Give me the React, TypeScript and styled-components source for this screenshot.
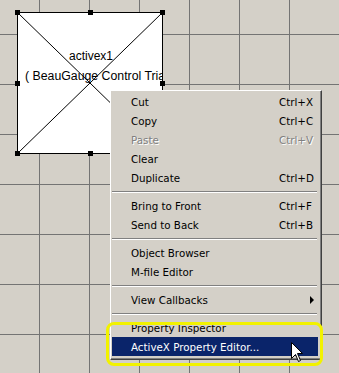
import styled, { createGlobalStyle } from 'styled-components';

const GlobalStyle = createGlobalStyle`
  html, body {
    margin: 0;
    padding: 0;
    background: #d4d0c8;
  }
`;

const Canvas = styled.div`
  position: relative;
  width: 339px;
  height: 373px;
  overflow: hidden;
  background-color: #d4d0c8;
  background-image: linear-gradient(to right, #747474 1px, transparent 1px),
    linear-gradient(to bottom, #747474 1px, transparent 1px);
  background-size: 50px 50px;
  background-position: 39px 34px;
  font-family: 'DejaVu Sans', 'Liberation Sans', sans-serif;
`;

/* the ActiveX control sitting on the layout canvas */
const Control = styled.div`
  position: absolute;
  left: 17px;
  top: 12px;
  width: 146px;
  height: 142px;
  box-sizing: border-box;
  border: 1px solid #000;
  background: #fff;
  padding-top: 33px;
  display: flex;
  flex-direction: column;
  font-family: 'Liberation Sans', Arial, sans-serif;
  font-size: 12px;
  line-height: 20px;
  color: #000;
`;

const Cross = styled.svg`
  position: absolute;
  inset: 0;
  width: 100%;
  height: 100%;
`;

const ControlName = styled.div`
  position: relative;
  text-align: center;
  padding-left: 2px;
`;

const ControlType = styled.div`
  position: relative;
  white-space: nowrap;
  overflow: hidden;
  padding-left: 7px;
  font-size: 12.3px;
`;

const Handle = styled.span<{ $x: 'l' | 'c' | 'r'; $y: 't' | 'm' | 'b' }>`
  position: absolute;
  width: 5px;
  height: 5px;
  background: #000;
  left: ${(p) => (p.$x === 'l' ? '-3px' : p.$x === 'c' ? 'calc(50% - 2px)' : 'auto')};
  right: ${(p) => (p.$x === 'r' ? '-3px' : 'auto')};
  top: ${(p) => (p.$y === 't' ? '-3px' : p.$y === 'm' ? 'calc(50% - 2px)' : 'auto')};
  bottom: ${(p) => (p.$y === 'b' ? '-3px' : 'auto')};
`;

/* context menu */
const Menu = styled.div`
  position: absolute;
  left: 110px;
  top: 90px;
  width: 212px;
  box-sizing: border-box;
  background: #d4d0c8;
  border: 1px solid;
  border-color: #ffffff #404040 #404040 #ffffff;
  box-shadow: inset -1px -1px #808080;
  padding: 1px 3px 3px 1px;
  display: flex;
  flex-direction: column;
`;

const Item = styled.div<{ $disabled?: boolean; $active?: boolean }>`
  display: grid;
  grid-template-columns: 148px 1fr;
  align-items: center;
  height: 19px;
  padding-left: 19px;
  font-size: 10.3px;
  white-space: nowrap;
  color: ${(p) => (p.$disabled ? '#808080' : p.$active ? '#ffffff' : '#000000')};
  background: ${(p) => (p.$active ? '#0a246a' : 'transparent')};
  text-shadow: ${(p) => (p.$disabled ? '1px 1px 0 #ffffff' : 'none')};
`;

const Shortcut = styled.span`
  display: flex;
  align-items: center;
`;

const SubArrow = styled.span`
  margin-left: auto;
  margin-right: 4px;
  width: 0;
  height: 0;
  border-top: 4px solid transparent;
  border-bottom: 4px solid transparent;
  border-left: 4px solid #000;
`;

const Separator = styled.div`
  height: 9px;
  display: flex;
  align-items: center;
  padding: 0 1px 0 0;

  &::before {
    content: '';
    flex: 1;
    height: 0;
    border-top: 1px solid #808080;
    border-bottom: 1px solid #ffffff;
  }
`;

const Highlight = styled.div`
  position: absolute;
  left: 106px;
  top: 322px;
  width: 217px;
  height: 44px;
  box-sizing: border-box;
  border: 3px solid #f2f200;
  border-radius: 8px;
  pointer-events: none;
`;

const Cursor = styled.svg`
  position: absolute;
  left: 291px;
  top: 342px;
`;

type Entry =
  | { label: string; key?: string; disabled?: boolean; active?: boolean; sub?: boolean }
  | 'sep';

const entries: Entry[] = [
  { label: 'Cut', key: 'Ctrl+X' },
  { label: 'Copy', key: 'Ctrl+C' },
  { label: 'Paste', key: 'Ctrl+V', disabled: true },
  { label: 'Clear' },
  { label: 'Duplicate', key: 'Ctrl+D' },
  'sep',
  { label: 'Bring to Front', key: 'Ctrl+F' },
  { label: 'Send to Back', key: 'Ctrl+B' },
  'sep',
  { label: 'Object Browser' },
  { label: 'M-file Editor' },
  'sep',
  { label: 'View Callbacks', sub: true },
  'sep',
  { label: 'Property Inspector' },
  { label: 'ActiveX Property Editor...', active: true },
];

function App() {
  return (
    <>
      <GlobalStyle />
      <Canvas>
        <Control>
          <Cross preserveAspectRatio="none" viewBox="0 0 144 140">
            <line x1="0" y1="0" x2="144" y2="140" stroke="#000" strokeWidth="1" />
            <line x1="0" y1="140" x2="144" y2="0" stroke="#000" strokeWidth="1" />
          </Cross>
          <ControlName>activex1</ControlName>
          <ControlType>( BeauGauge Control Trial )</ControlType>
          <Handle $x="l" $y="t" />
          <Handle $x="c" $y="t" />
          <Handle $x="r" $y="t" />
          <Handle $x="l" $y="m" />
          <Handle $x="r" $y="m" />
          <Handle $x="l" $y="b" />
          <Handle $x="c" $y="b" />
          <Handle $x="r" $y="b" />
        </Control>

        <Menu>
          {entries.map((e, i) =>
            e === 'sep' ? (
              <Separator key={i} />
            ) : (
              <Item key={i} $disabled={e.disabled} $active={e.active}>
                <span>{e.label}</span>
                <Shortcut>
                  {e.key}
                  {e.sub && <SubArrow />}
                </Shortcut>
              </Item>
            )
          )}
        </Menu>

        <Highlight />

        <Cursor width="13" height="21" viewBox="0 0 13 21">
          <path
            d="M0.5 0.5 L0.5 16.5 L4.5 12.5 L7.5 19.5 L9.5 18.5 L6.5 11.5 L11.5 11.5 Z"
            fill="#fff"
            stroke="#000"
            strokeWidth="1"
          />
        </Cursor>
      </Canvas>
    </>
  );
}

export default App;
